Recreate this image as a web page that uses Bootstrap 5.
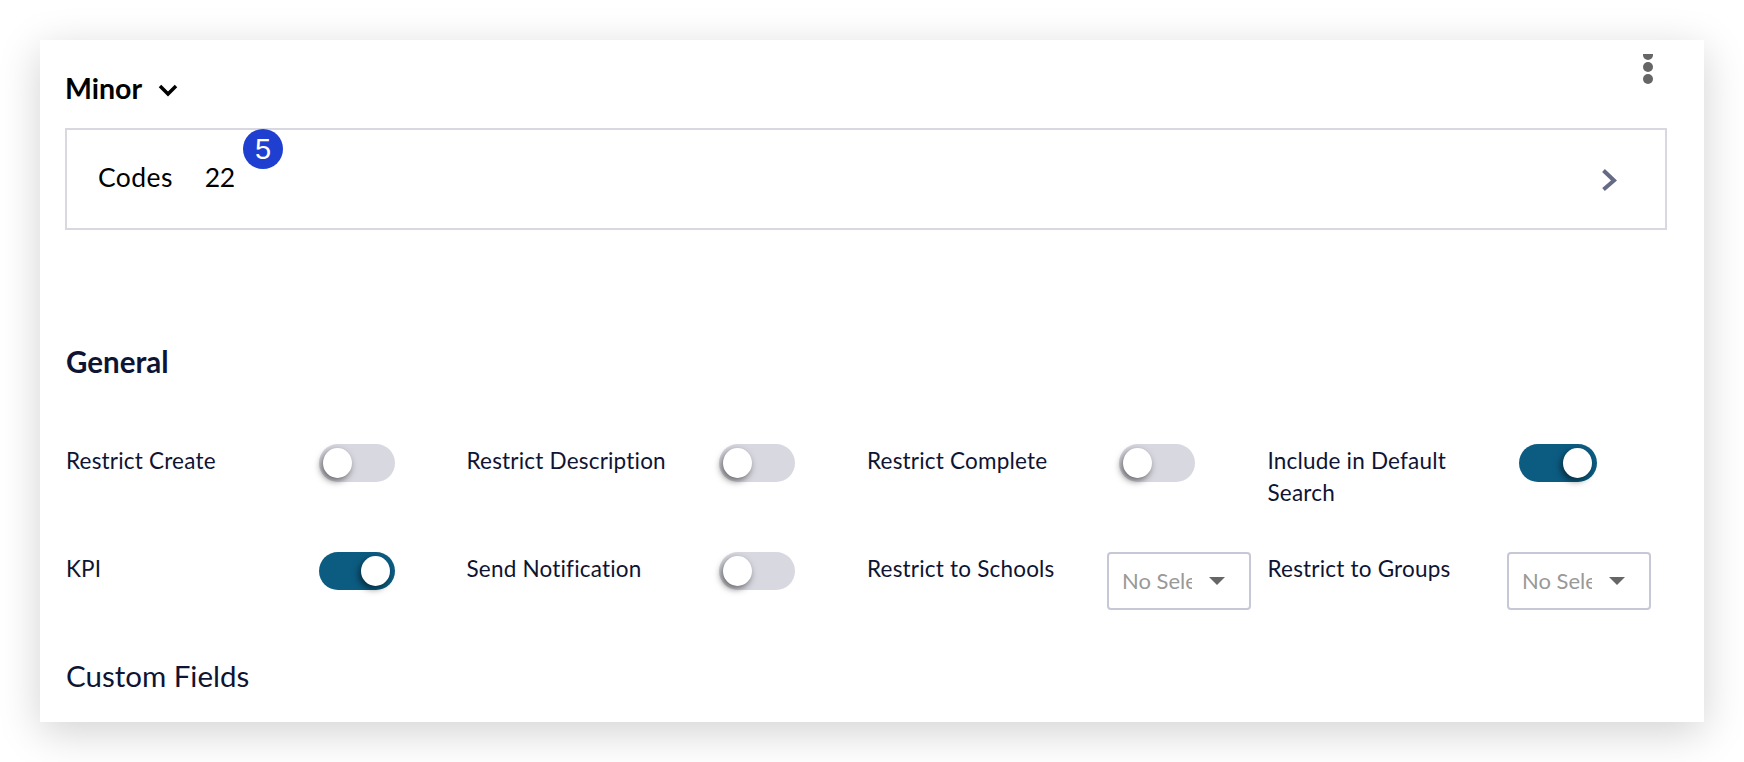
<!DOCTYPE html>
<html lang="en"><head><meta charset="utf-8"><title>Minor</title>
<link href="https://cdn.jsdelivr.net/npm/bootstrap@5.3.0/dist/css/bootstrap.min.css" rel="stylesheet">
<style>
html,body{height:762px;overflow:hidden;background:#fff}
body{font-family:Lato,"Liberation Sans",sans-serif;color:#0e1433;padding:40px}
.sheet{height:682px;background:#fff;box-shadow:0 10px 40px rgba(0,0,0,.18);padding:0 26px;position:relative}
.sheet-head{height:88px;padding-top:28px}
.sheet-title{font-size:28.500px;font-weight:700;color:#000;line-height:40px;margin:0 0 0 -1px}
.title-caret{margin-top:3px}
.more{position:absolute;top:14px;right:51px;width:10px;height:32px;overflow:hidden}
.more i{display:block;width:10px;height:10px;border-radius:50%;background:#666;margin-bottom:2px}
.more i:first-child{margin-top:-4px}
.codes{height:102px;border:2px solid #d8d8e0;margin-right:11px;margin-left:-1px;padding:0 46px 3px 31px;color:#000;font-size:26.500px;letter-spacing:.4px;position:relative}
.codes-label{margin-right:32px}
.codes-num{letter-spacing:-.3px}
.count-pill{position:absolute;left:176px;top:-1px;width:40px;height:40px;border-radius:50%;background:#1e3fd0;color:#fff;font-size:29px;padding-top:2px;letter-spacing:0;font-family:"Liberation Sans",sans-serif;display:flex;align-items:center;justify-content:center}
.chev{margin-right:2px;margin-top:5px}
.sec-title{font-size:29.500px;font-weight:700;margin:112px 0 0;line-height:40px}
.opts{display:grid;grid-template-columns:repeat(4,400.5px);margin-top:62px;font-size:22.500px;letter-spacing:.2px;line-height:32px}
.opt{display:flex;align-items:flex-start;height:108px}
.opt-label{width:253px;flex:none;padding-top:1px}
.opt-label-mid{width:252px}
.opt-label-end{width:251px}
.opt-narrow{width:240px}
.opt-narrow-end{width:239.500px}
.tog{display:block;width:76px;height:38px;border-radius:19px;background:#d8d8e0;position:relative}
.tog::after{content:"";position:absolute;left:4px;top:4px;width:29px;height:30px;border-radius:50%;background:#fff;box-shadow:-2px 3px 7px rgba(0,0,0,.55)}
.tog-on{background:#0c5c82}
.tog-on::after{left:42px}
.tog-wide{width:78px}
.tog-wide::after{left:44px}
.picker{width:144px;height:58px;border:2px solid #c6c8d6;border-radius:4px;display:flex;align-items:center;padding-left:13px;color:#999;font-size:22px;letter-spacing:0;background:#fff}
.picker-text{width:70px;overflow:hidden;white-space:nowrap;flex:none}
.picker-caret{width:0;height:0;border-left:8px solid transparent;border-right:8px solid transparent;border-top:8px solid #666;margin-left:17px}
.custom{font-size:29.500px;line-height:40px;margin-top:-4px}
</style></head>
<body>
<div class="sheet">
  <div class="sheet-head d-flex align-items-start">
    <h1 class="sheet-title d-flex align-items-center">Minor
      <svg class="ms-3 title-caret" width="20" height="14" viewBox="0 0 20 14"><path d="M2 3l8 8 8-8" fill="none" stroke="#000" stroke-width="3.500"/></svg>
    </h1>
  </div>
  <div class="more"><i></i><i></i><i></i></div>
  <div class="codes d-flex align-items-center">
    <span class="codes-label">Codes</span><span class="codes-num">22</span>
    <span class="count-pill">5</span>
    <svg class="ms-auto chev" width="16" height="24" viewBox="0 0 16 24"><path d="M2.500 2.500L13 12.500 2.500 21.500" fill="none" stroke="#666b85" stroke-width="4"/></svg>
  </div>
  <h2 class="sec-title">General</h2>
  <div class="opts">
    <div class="opt"><div class="opt-label">Restrict Create</div><span class="tog"></span></div>
    <div class="opt"><div class="opt-label opt-label-mid">Restrict Description</div><span class="tog"></span></div>
    <div class="opt"><div class="opt-label opt-label-mid">Restrict Complete</div><span class="tog"></span></div>
    <div class="opt"><div class="opt-label opt-label-end">Include in Default<br>Search</div><span class="tog tog-on tog-wide"></span></div>
    <div class="opt"><div class="opt-label">KPI</div><span class="tog tog-on"></span></div>
    <div class="opt"><div class="opt-label opt-label-mid">Send Notification</div><span class="tog"></span></div>
    <div class="opt"><div class="opt-label opt-narrow">Restrict to Schools</div><div class="picker"><span class="picker-text">No Selection</span><span class="picker-caret"></span></div></div>
    <div class="opt"><div class="opt-label opt-narrow-end">Restrict to Groups</div><div class="picker"><span class="picker-text">No Selection</span><span class="picker-caret"></span></div></div>
  </div>
  <div class="custom">Custom Fields</div>
</div>
<script src="https://cdn.jsdelivr.net/npm/bootstrap@5.3.0/dist/js/bootstrap.bundle.min.js"></script>
</body></html>
